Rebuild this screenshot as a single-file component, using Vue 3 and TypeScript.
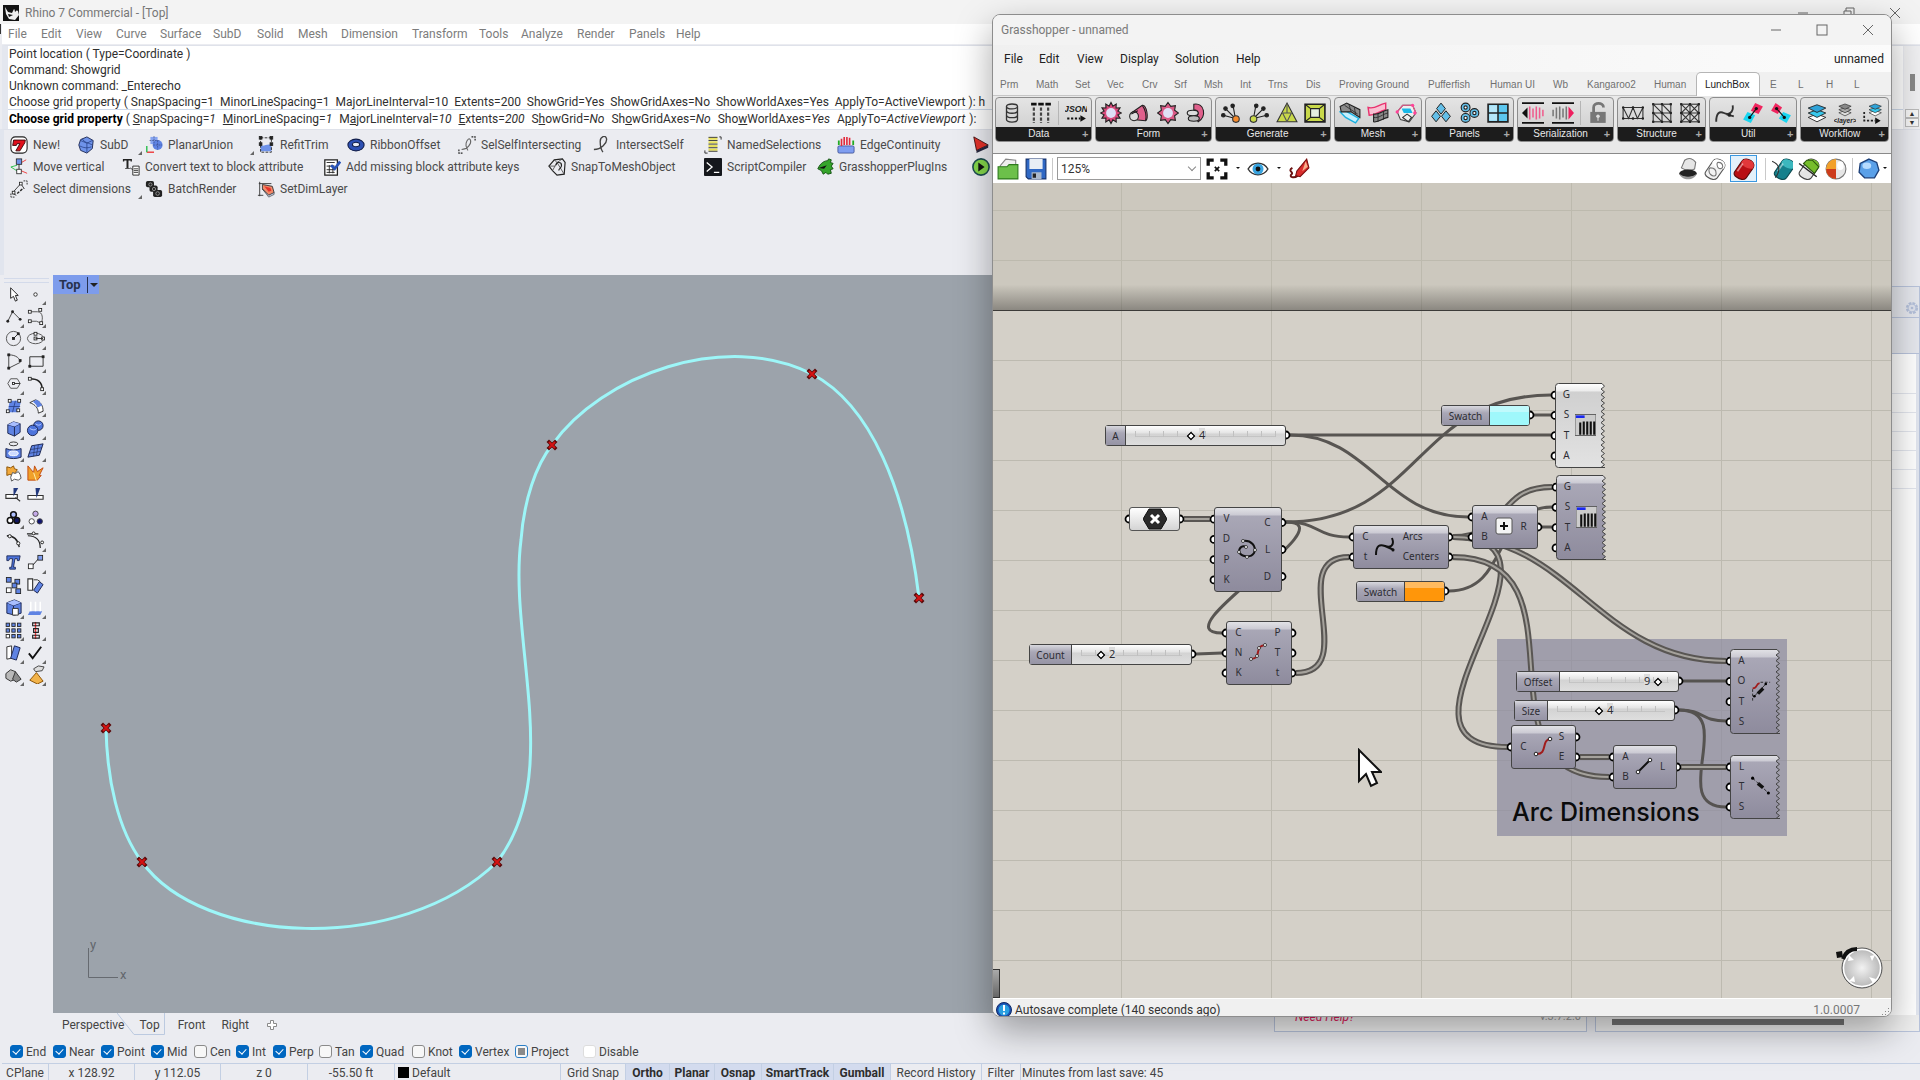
<script setup lang="ts">
import { computed, ref } from 'vue'

interface Sized { label: string; w: number }
interface Tool extends Sized { icon: string; flyout?: boolean }

const rhinoMenu: Sized[] = [
  { label: 'File', w: 33 }, { label: 'Edit', w: 35 }, { label: 'View', w: 40 }, { label: 'Curve', w: 44 },
  { label: 'Surface', w: 53 }, { label: 'SubD', w: 44 }, { label: 'Solid', w: 41 }, { label: 'Mesh', w: 43 },
  { label: 'Dimension', w: 71 }, { label: 'Transform', w: 67 }, { label: 'Tools', w: 42 }, { label: 'Analyze', w: 56 },
  { label: 'Render', w: 52 }, { label: 'Panels', w: 47 }, { label: 'Help', w: 40 },
]

const history: string[] = [
  'Point location ( Type=Coordinate )',
  'Command: Showgrid',
  'Unknown command: _Enterecho',
  'Choose grid property ( SnapSpacing=1  MinorLineSpacing=1  MajorLineInterval=10  Extents=200  ShowGrid=Yes  ShowGridAxes=No  ShowWorldAxes=Yes  ApplyTo=ActiveViewport ): h',
]

interface Option { pre: string; key: string; post: string; value: string }
const options: Option[] = [
  { pre: '', key: 'S', post: 'napSpacing', value: '1' },
  { pre: '', key: 'M', post: 'inorLineSpacing', value: '1' },
  { pre: 'M', key: 'a', post: 'jorLineInterval', value: '10' },
  { pre: '', key: 'E', post: 'xtents', value: '200' },
  { pre: 'S', key: 'h', post: 'owGrid', value: 'No' },
  { pre: 'Sh', key: 'o', post: 'wGridAxes', value: 'No' },
  { pre: 'Sho', key: 'w', post: 'WorldAxes', value: 'Yes' },
  { pre: 'A', key: 'p', post: 'plyTo', value: 'ActiveViewport' },
]

const toolRows: Tool[][] = [
  [
    { icon: 'seven', label: 'New!', w: 67 }, { icon: 'subd', label: 'SubD', w: 68, flyout: true },
    { icon: 'planar', label: 'PlanarUnion', w: 112, flyout: true }, { icon: 'refit', label: 'RefitTrim', w: 90 },
    { icon: 'ribbon', label: 'RibbonOffset', w: 111 }, { icon: 'selself', label: 'SelSelfIntersecting', w: 135 },
    { icon: 'loop', label: 'IntersectSelf', w: 111 }, { icon: 'named', label: 'NamedSelections', w: 133 },
    { icon: 'edge', label: 'EdgeContinuity', w: 135 }, { icon: 'book', label: '', w: 22 },
  ],
  [
    { icon: 'move', label: 'Move vertical', w: 112 }, { icon: 'convert', label: 'Convert text to block attribute', w: 201 },
    { icon: 'addkeys', label: 'Add missing block attribute keys', w: 225 }, { icon: 'snapmesh', label: 'SnapToMeshObject', w: 156 },
    { icon: 'script', label: 'ScriptCompiler', w: 112 }, { icon: 'plug', label: 'GrasshopperPlugIns', w: 156 },
    { icon: 'run', label: '', w: 22 },
  ],
  [
    { icon: 'seldim', label: 'Select dimensions', w: 135, flyout: true }, { icon: 'batch', label: 'BatchRender', w: 112 },
    { icon: 'dimlayer', label: 'SetDimLayer', w: 112 },
  ],
]

const sq = (x: number, y: number, f = '#fff', s = 3) => `<rect x="${x - s / 2}" y="${y - s / 2}" width="${s}" height="${s}" fill="${f}" stroke="#222" stroke-width=".9"/>`
const star = (n: number, R: number, r: number, c: string) => {
  const p: string[] = []
  for (let i = 0; i < n * 2; i++) {
    const q = i % 2 ? r : R
    const a = Math.PI * i / n - Math.PI / 2
    p.push(`${(10 + q * Math.cos(a)).toFixed(2)},${(10 + q * Math.sin(a)).toFixed(2)}`)
  }
  return `<polygon points="${p.join(' ')}" fill="${c}" stroke="#222" stroke-width="1"/>`
}
const layers = (a: string, b: string, c: string) =>
  `<g stroke="#222" stroke-width=".8"><path d="M2 14l8-3 8 3-8 4z" fill="${c}"/><path d="M2 10l8-3 8 3-8 4z" fill="${b}"/><path d="M2 5.500l8-3 8 3-8 4z" fill="${a}"/></g>`
// Tilted barrel: body, lit top face and a highlight stripe.
const barrel = (body: string, face: string, edge: string) =>
  `<path d="M1.500 12.500L8 3c2-3 6-2 8.500-.5 3 2 3 5 1.500 7l-6 8.500c-2 2.500-6 1.500-8.500-.5-2.500-1.500-3-3.500-2-5z" fill="${body}" stroke="${edge}"/><path d="M8 3c2-3 6-2 8.500-.5 3 2 3 5 1.500 7-2 1-6-.5-8-2S7 4 8 3z" fill="${face}"/><path d="M4 12l5-7" stroke="#fff" stroke-opacity=".5" stroke-width="1.500"/>`
const truss = (extra: string) =>
  `<g fill="none" stroke="#333" stroke-width="1"><rect x="2" y="2" width="16" height="16"/><path d="${extra}"/></g>${[2, 10, 18].map(x => [2, 10, 18].map(y => `<rect x="${x - 1}" y="${y - 1}" width="2" height="2" fill="#222"/>`).join('')).join('')}`

const art: Record<string, string> = {
  seven: '<rect x="1" y="1" width="18" height="18" rx="5" fill="#fff" stroke="#222" stroke-width="1.200"/><path d="M4 4.500h13l-.5 3-5.500 9H6.500l4.500-8H8l-1 2H3z" fill="#e0101c" stroke="#3a0508" stroke-width="1"/>',
  subd: '<path d="M4 4l7-3 7 4-1 9-6 5-7-3-2-6z" fill="#6f93ea" stroke="#1a2550" stroke-width="1"/><path d="M4 5l7 3 6-3M11 8v10M6 3c1 4 8 5 11 7M3 11c4 2 8 3 13 1" fill="none" stroke="#22397e" stroke-width=".8"/>',
  planar: '<path d="M2 18h8" fill="none" stroke="#e33" stroke-width="1.500"/><path d="M2 11v7" stroke="#2b4" stroke-width="1.500"/><rect x="6" y="1" width="8" height="8" fill="#86a4f0"/><circle cx="14" cy="10" r="5.500" fill="#5f83e3"/><path d="M10 0v9M5 5h10M14 5v10M9 10h10" stroke="#33457e" stroke-width=".7" stroke-dasharray="2 1"/>',
  refit: '<path d="M4 10c3 3 9-3 12 1v6H4z" fill="#6f93ea"/><path d="M4 2h12v16H4z" fill="none" stroke="#222" stroke-width="1" stroke-dasharray="3 1.500"/>' + sq(4, 2, '#222') + sq(16, 2, '#222') + sq(4, 9, '#222') + sq(16, 9, '#222'),
  ribbon: '<ellipse cx="10" cy="10" rx="9" ry="6.500" fill="#2d50b4" stroke="#0f1c4a" stroke-width="1.200"/><ellipse cx="10" cy="9.500" rx="4" ry="2.500" fill="#e8ebf5" stroke="#0f1c4a" stroke-width="1.200"/>',
  selself: '<path d="M4 15c6 0 11-6 10-10s-4-1-5 3 1 6 2 8" fill="none" stroke="#666" stroke-width="1.200"/><path d="M15 1h4v4M1 15v4h4" fill="none" stroke="#222" stroke-width="1.300" stroke-dasharray="2 1"/>',
  loop: '<path d="M1 15c8 0 15-7 14-12s-7-2-7 3 1 9 3 12" fill="none" stroke="#444" stroke-width="1.500"/>',
  named: '<path d="M5 3h10M5 7h10M5 11h10M5 15h10" stroke="#e8e05a" stroke-width="2.500"/><path d="M5 1.500h10M5 5h10M5 9h10M5 13h10M5 17h10" stroke="#333" stroke-width="1"/><path d="M17 1h2v3M1 16v3h3" fill="none" stroke="#222"/>',
  edge: '<rect x="1" y="11" width="18" height="8" rx="1.500" fill="#7f9df0" stroke="#2b3f86" stroke-width=".8"/><path d="M2 5v5M18 5v5" stroke="#2a2" stroke-width="2"/><path d="M5 3v8M8 1v9M11 1v9M14 2v8" stroke="#e22a3c" stroke-width="1.800"/>',
  book: '<path d="M2 1l16 9-13 6z" fill="#e5322a" stroke="#401010"/><path d="M5 16l13-6v3L5 19z" fill="#282840"/>',
  move: '<path d="M1 10l7-2M1 10l8 5" stroke="#2b4" stroke-width="1"/><path d="M11 6l7-4M12 14l7 3" stroke="#e33"/><path d="M10 6v8" stroke="#222"/>' + sq(10, 4, '#6f93ea', 6) + sq(10, 15, '#fff', 5),
  convert: '<path d="M1 1h10v3H9.500V2.800H7.200V11h1.500v1H3.500v-1H5V2.800H2.500V4H1z" fill="#222"/><path d="M12 9h7v10h-7z" fill="#fff" stroke="#222"/><path d="M13 12h5M13 14h5M13 16h5M9 11l3 2" stroke="#333"/>',
  addkeys: '<path d="M2 2h14v17H2z" fill="#fff" stroke="#222" stroke-width="1.400"/><path d="M4 5h9M4 9h9M4 13h9M7 8v9M11 8v9M4 16h9" stroke="#222"/><path d="M9 8l4 4 6-8" fill="none" stroke="#2853b8" stroke-width="3"/>',
  snapmesh: '<path d="M1 9l6-7 9-1 3 4-1 13-8 1-5-5z" fill="none" stroke="#222" stroke-width="1.300"/><path d="M7 2l3 3-5 9M10 5l8 13M1 9l7 0M16 1l-6 4" fill="none" stroke="#444" stroke-width=".9"/><path d="M9 8c0-4 6-4 6 0s-3 3-3 6" fill="none" stroke="#222" stroke-width="1.300"/>',
  script: '<rect width="20" height="20" y="0" rx="1" fill="#15171c"/><path d="M3 5l6 5-6 5" fill="none" stroke="#fff" stroke-width="1.400"/><path d="M11 16h6" stroke="#fff" stroke-width="1.400"/>',
  plug: '<path d="M2 12c3-7 8-9 11-9l1-2 3 1-1 3 3 1-2 3 2 3-3 1 1 4-4 1-2-2-3 2-2-4z" fill="#35a52b" stroke="#114d10"/><path d="M3 11l9-3-3 4z" fill="#111"/>',
  run: '<circle cx="10" cy="10" r="9" fill="#85d84b" stroke="#1d4d50" stroke-width="1.800"/><path d="M7 5l7 5-7 5z" fill="#111"/>',
  seldim: '<path d="M3 14l9-10M12 4l4 6M3 15l4 2" stroke="#333" fill="none"/><path d="M15 1h4v4M1 15v4h4" fill="none" stroke="#222" stroke-dasharray="2 1"/>' + sq(12, 4) + sq(4, 14) + '<path d="M8 15l7-6" stroke="#222" stroke-width="1.500" stroke-dasharray="3 1.500"/>',
  batch: '<g fill="#222"><rect x="1" y="1" width="9" height="7" rx="2"/><rect x="5" y="6" width="9" height="7" rx="2"/><rect x="9" y="11" width="10" height="8" rx="2"/></g><g fill="none" stroke="#999"><circle cx="6" cy="5" r="1.800"/><circle cx="10" cy="10" r="1.800"/><circle cx="14" cy="15" r="2"/></g>',
  dimlayer: '<path d="M2 4h14M3 2v16M1 17h6" stroke="#333" fill="none"/><path d="M6 5l11 2 2 7-6 3-7-7z" fill="#f08a6a" stroke="#333"/><path d="M8 7l7 2 1 3-3 1z" fill="#e5322a"/><path d="M6 10l7 7 6-3v2l-6 3z" fill="#cfd6ee" stroke="#333" stroke-width=".7"/>',
}

const pal: [string, boolean][] = [
  ['<path d="M7 3v11l3-2 2 5 2-1-2-5h3z" fill="#fff" stroke="#222"/>', false],
  ['<circle cx="10" cy="10" r="1.800" fill="#fff" stroke="#333"/>', true],
  ['<path d="M4 15L9 5l8 8" fill="none" stroke="#444"/><g fill="#222"><circle cx="4" cy="15" r="1.500"/><circle cx="9" cy="5" r="1.500"/><circle cx="17" cy="13" r="1.500"/></g>', true],
  ['<path d="M4 5h8c6 0 6 8 4 12M4 15h7l5 2" fill="none" stroke="#555"/>' + sq(4, 5) + sq(15, 3) + sq(4, 15) + sq(16, 17), true],
  ['<circle cx="10" cy="10" r="7.500" fill="none" stroke="#555"/><path d="M10 10l5-5" stroke="#333"/>' + sq(10, 10, '#222', 2) + sq(15, 5, '#222', 2), true],
  ['<ellipse cx="10" cy="10" rx="8.500" ry="5.500" fill="none" stroke="#555"/>' + sq(10, 5) + sq(10, 10) + sq(18, 10) + '<path d="M10 10h8" stroke="#333"/>', true],
  ['<path d="M5 3c8 0 12 4 12 8L5 17z" fill="none" stroke="#444"/>' + sq(5, 3, '#222', 2) + sq(5, 17, '#222', 2) + sq(17, 9, '#222', 2), true],
  ['<path d="M4 5h14v10H4z" fill="none" stroke="#333"/>' + sq(4, 15, '#222', 2) + sq(18, 5, '#222', 2), true],
  ['<path d="M4 10l3-5h7l3 5-3 5H7z" fill="none" stroke="#555"/><path d="M10 10h7" stroke="#333"/>' + sq(10, 10, '#fff', 2), true],
  ['<path d="M4 5c9 0 13 4 13 11" fill="none" stroke="#222" stroke-width="1.600"/>' + sq(4, 5) + sq(17, 16), true],
  ['<path d="M6 4h12l-3 12H4z" fill="#5f83e3"/><path d="M12 4l-3 12M5 10h12" stroke="#22397e" stroke-width=".8"/>' + sq(6, 4) + sq(16, 4) + sq(4, 15) + sq(15, 14), true],
  ['<path d="M4 6l6-3c6 2 8 7 8 12l-5 2c0-5-3-9-9-11z" fill="#fff" stroke="#333"/><path d="M7 5l4-2c3 1 5 4 6 6l-5 2c-1-3-3-5-5-6z" fill="#5f83e3"/>', true],
  ['<path d="M4 6l6-3 7 2v9l-6 4-7-3z" fill="#5f83e3" stroke="#1a2550"/><path d="M4 6l7 2v10M11 8l6-3" fill="none" stroke="#1a2550"/><path d="M4 6l6-3 7 2-6 3z" fill="#a8beff"/>', true],
  ['<circle cx="13" cy="7" r="5" fill="#4d74dc" stroke="#1a2550"/><circle cx="7" cy="12" r="5.500" fill="#4d74dc" stroke="#1a2550"/><path d="M4 10c3 2 6 2 7 0M10 5c2 2 5 2 6 0" stroke="#b9caff" fill="none"/>', true],
  ['<ellipse cx="10" cy="3" rx="4.500" ry="2" fill="none" stroke="#333"/><path d="M2 8c5 2 11 2 16 0v9c-5 2-11 2-16 0z" fill="#5f83e3" stroke="#1a2550"/><ellipse cx="10" cy="13" rx="5" ry="2.500" fill="#cddaff" stroke="#fff"/>', true],
  ['<path d="M6 5l12-2-4 12-12 2z" fill="#5f83e3" stroke="#1a2550"/><path d="M9 5l-1 11M13 4l-2 11M5 9l12-2M3 13l12-2" stroke="#1a2550" stroke-width=".6"/>', true],
  ['<path d="M3 3l4 1 3-2 1 3 3 1-2 3-3 3-3-1-3 1 0-4z" fill="#f2a93b" stroke="#8a5206"/><path d="M9 9l3 1 3-2 2 3 1 4-3 2-4-1-3 2-1-4z" fill="#fff" stroke="#555"/>', false],
  ['<path d="M2 2l6 7 1-7 3 6 6-4-4 8 2 0-4 5H2z" fill="#f0a02a" stroke="#c24a10"/><path d="M8 9l3 9" stroke="#fff2b0"/>', false],
  ['<path d="M2 9h12v4H2zM12 12l5 4" fill="#fff" stroke="#333" stroke-width="1.200"/><path d="M10 2l5 0-5 9z" fill="#22397e"/>', false],
  ['<path d="M2 10h16v4H2z" fill="#fff" stroke="#333" stroke-width="1.200"/><path d="M10 2h5l-4 11z" fill="#22397e"/>', false],
  ['<g stroke="#111" stroke-width="1.600"><circle cx="10" cy="6" r="3" fill="#aebfff"/><circle cx="6.500" cy="12" r="3" fill="#fff"/><circle cx="13.500" cy="12" r="3" fill="#101560"/></g>', true],
  ['<g stroke="#444"><circle cx="10" cy="5" r="2.800" fill="#c4a9e8"/><circle cx="6" cy="13" r="2.800" fill="#fff"/><circle cx="14.500" cy="13" r="2.800" fill="#101570"/></g>', false],
  ['<path d="M3 5c8 0 12 5 13 12" fill="none" stroke="#222" stroke-width="1.400"/><g fill="#fff" stroke="#222"><circle cx="6" cy="5.500" r="1.700"/><circle cx="15" cy="13" r="1.700"/></g>', false],
  ['<path d="M1 3h12M2 5c9 0 13 5 13 13" fill="none" stroke="#222" stroke-width="1.300"/><g fill="#fff" stroke="#222"><circle cx="8" cy="2.500" r="1.500"/><circle cx="17" cy="12" r="1.500"/></g>', true],
  ['<path d="M3 3h14l-1 5h-2V6h-2.500l-1.500 9h2v2H6v-2h2l1-9H6L5 8H3z" fill="#4d74dc" stroke="#1a2550" stroke-width=".9"/>', false],
  ['<path d="M7 13l7-8" stroke="#222"/>' + sq(5, 14, '#fff', 5) + sq(15, 5, '#7f9df0', 5), true],
  [sq(5, 4, '#5f83e3', 5) + sq(14, 6, '#5f83e3', 5) + sq(5, 15, '#fff', 5) + sq(11, 10, '#5f83e3', 5) + sq(15, 16, '#5f83e3', 5), false],
  ['<path d="M2 3h5v12H2z" fill="#fff" stroke="#333" stroke-width="1.200"/><path d="M14 6l4 3-6 9-4-3z" fill="#5f83e3" stroke="#1a2550"/><path d="M8 4h4l3 2" stroke="#333" fill="none"/>', false],
  ['<path d="M3 5l8-3 7 3v11l-7 2-8-2z" fill="#5f83e3" stroke="#1a2550"/><path d="M3 5l7 3 8-3M10 8v10" stroke="#1a2550" fill="none"/><path d="M3 5l8-3 7 3-8 3z" fill="#a8beff"/><path d="M9 11h6v7H9z" fill="#fff" stroke="#333"/>', true],
  ['<path d="M4 14h13l-2 4H2z" fill="#5f83e3"/><path d="M5 14V4M10 14V4M15 14V4" stroke="#fff" stroke-width="1.600"/>', true],
  [[4, 10, 16].map(y => [4, 10, 16].map(x => sq(x, y, y === 16 && x === 4 ? '#fff' : '#5f83e3', 3.5)).join('')).join(''), true],
  ['<path d="M10 1v18" stroke="#e33" stroke-width="1.500"/><path d="M7 2h7v3H7zM8 8h5v4H8zM7 15h7v3H7z" fill="none" stroke="#222" stroke-width="1.200"/>', true],
  ['<path d="M3 4l5-1v13l-5 1z" fill="#fff" stroke="#333"/><path d="M11 3l6 2-4 13-6-2z" fill="#5f83e3" stroke="#1a2550"/>', true],
  ['<path d="M3 11l4 5 9-12" fill="none" stroke="#111" stroke-width="2"/>', true],
  ['<path d="M2 9l5-4 5 2v8l-5 2-5-3z" fill="#b9b9b9" stroke="#333"/><path d="M12 7l6 8-5 3-4-3z" fill="#8c8c8c" stroke="#333"/>', true],
  ['<path d="M8 4l5-3 6 1-2 4-7 1z" fill="#ddd" stroke="#444"/><path d="M11 8l7 9-6 3-8-4z" fill="#f2b34a" stroke="#8a5206"/>', true],
]

const ribbon: { name: string; w: number; icons: string[] }[] = [
  { name: 'Data', w: 97, icons: [
    '<g fill="#d7d7d7" stroke="#333" stroke-width="1.200"><path d="M5 4v12c0 3 10 3 10 0V4"/><ellipse cx="10" cy="4" rx="5" ry="2.200"/><path d="M5 8c0 3 10 3 10 0M5 12c0 3 10 3 10 0" fill="none"/></g>',
    '<path d="M1 2h5M7.500 2h5M14 2h5" stroke="#111" stroke-width="2.500"/><path d="M3.500 5v14M10 5v14M16.500 5v14" stroke="#444" stroke-width="2" stroke-dasharray="3 1.500"/>', '|',
    '<text x="10" y="9" text-anchor="middle" font-family="Liberation Sans" font-size="8" font-weight="bold" font-style="italic" fill="#222">JSON</text><path d="M2 15h12" stroke="#111" stroke-width="2" stroke-dasharray="2 1.500"/><path d="M14 12l5 3-5 3z" fill="#111"/>',
  ] },
  { name: 'Form', w: 116, icons: [
    star(12, 9.5, 6.5, '#d94a7c') + '<circle cx="10" cy="10" r="4.500" fill="#dfe0f6"/>',
    '<path d="M3 10L13 3c4-1 6 12 3 14l-12-1z" fill="#e0608c" stroke="#222"/><ellipse cx="5.500" cy="13" rx="4" ry="4" fill="#ddd" stroke="#222"/><path d="M13 3c3 4 4 10 3 14M3 11l6-3" fill="none" stroke="#222"/>',
    star(8, 9.5, 6.5, '#d95a86') + '<circle cx="10" cy="10" r="4.500" fill="#dfe0f6"/>',
    '<path d="M8 2c10-2 12 12 4 16l-3-5c4 0 4-6-1-6z" fill="#e0608c" stroke="#222"/><ellipse cx="7" cy="10" rx="5" ry="2.500" fill="#ddd" stroke="#222"/><ellipse cx="8" cy="15" rx="5" ry="2.500" fill="#bbb" stroke="#222"/>',
  ] },
  { name: 'Generate', w: 116, icons: [
    '<g stroke="#222" fill="#222"><path d="M14 15L3 12M14 15L5 6M14 15L12 4"/><circle cx="3" cy="12" r="1.600"/><circle cx="5" cy="6" r="1.600"/><circle cx="11.500" cy="3.500" r="1.600"/></g><circle cx="14.500" cy="15.500" r="3" fill="#f58a2c" stroke="#333"/>',
    '<g stroke="#222" fill="#222"><path d="M5 15L17 12M5 15L14 6M5 15L7 4"/><circle cx="17" cy="12" r="1.600"/><circle cx="14" cy="6" r="1.600"/><circle cx="7.500" cy="3.500" r="1.600"/></g><circle cx="5" cy="15.500" r="3" fill="#c9d94a" stroke="#333"/>',
    '<path d="M10 1l9 17H1z" fill="#c9d94a" stroke="#333"/><path d="M5.500 10h9M10 18l-4-8M10 18l4-8M10 1v9" stroke="#555" fill="none"/>',
    '<path d="M1 2h18v16H1z" fill="#c9d94a" stroke="#222" stroke-width="1.500"/><path d="M6 6h8v8H6z" fill="#e5efe0" stroke="#222"/><path d="M1 2l5 4M19 2l-5 4M1 18l5-4M19 18l-5-4" stroke="#222"/>',
  ] },
  { name: 'Mesh', w: 88, icons: [
    '<path d="M1 9l5-1 12 7-3 4-9-5z" fill="#c3f0ff" stroke="#1ab0e0" stroke-width="1.300"/><path d="M1 4l6-3 12 6v7l-8-5-9 0z" fill="#8a8a8a" stroke="#222"/><path d="M5 3l12 8M9 2l2 7M14 5l1 6" stroke="#222" fill="none" stroke-width=".7"/>',
    '<path d="M1 5c7 2 9-3 16-4v6c-6 1-8 5-15 5z" fill="#f9c0d2" stroke="#e8326e" stroke-width="1.300"/><path d="M6 11c5 1 8-3 13-4v7c-5 1-9 5-13 4z" fill="#888" stroke="#222"/><path d="M10 11v7M15 9v7M6 14c5 1 8-3 13-4" stroke="#222" fill="none" stroke-width=".7"/>',
    '<path d="M2 9l5-6 9 0 3 7-6 8-8-2z" fill="#eee" stroke="#444"/><path d="M6 6h8l2 4H8z" fill="#19b9e8"/><path d="M2 9l5-6 9 0 3 7" fill="none" stroke="#e8588a"/><path d="M7 14l4-3 4 3-3 4z" fill="none" stroke="#333"/><g fill="#f49" ><circle cx="2" cy="9" r="1.500"/><circle cx="16" cy="3" r="1.500"/><circle cx="18" cy="10" r="1.500"/></g>',
  ] },
  { name: 'Panels', w: 88, icons: [
    '<g fill="#64bfe8" stroke="#222" stroke-width=".9"><path d="M10 1l4 5-4 5-4-5zM5.500 8l4 5-4 5-4-5zM14.500 8l4 5-4 5-4-5z"/></g>',
    '<g fill="#64bfe8" stroke="#222"><circle cx="6" cy="5" r="4"/><circle cx="6" cy="14.500" r="4"/><circle cx="14" cy="10" r="4"/></g><g fill="#fff" stroke="#222"><circle cx="6" cy="5" r="1.500"/><circle cx="6" cy="14.500" r="1.500"/><circle cx="14" cy="10" r="1.500"/></g>',
    '<path d="M1 2h18v16H1z" fill="#5cc6ee" stroke="#222" stroke-width="1.500"/><path d="M2 17V3h8v14z" fill="#b5e6f8"/><path d="M10 2v16M1 10h18" stroke="#222" stroke-width="1.400"/>',
  ] },
  { name: 'Serialization', w: 97, icons: [
    '<path d="M0 1h20M0 19h20" stroke="#111" stroke-width="1.600"/><path d="M5 5v10L0 10z" fill="#111"/><path d="M7 4v12M10 6v8M13 4v12M16 5v10M19 7v6" stroke="#ef5c8d" stroke-width="1.400"/>',
    '<path d="M0 1h20M0 19h20" stroke="#111" stroke-width="1.600"/><path d="M15 4v12l5-6z" fill="#ee1f5e"/><path d="M1 7v6M4 5v10M7 4v12M10 6v8M13 4v12" stroke="#777" stroke-width="1.400"/>', '|',
    '<path d="M6 9V5c0-5 9-5 9 0" fill="none" stroke="#777" stroke-width="2.500"/><rect x="3" y="9" width="14" height="10" fill="#777"/><circle cx="10" cy="13" r="1.600" fill="#ddd"/><path d="M10 13v4" stroke="#ddd"/>',
  ] },
  { name: 'Structure', w: 88, icons: [
    '<g fill="none" stroke="#333"><path d="M1 5h18v10H1zM1 5l5 10 4-10 4 10 5-10"/></g>' + [1, 10, 19].map(x => `<circle cx="${x}" cy="5" r="1.200" fill="#222"/><circle cx="${x}" cy="15" r="1.200" fill="#222"/>`).join(''),
    truss('M10 2v16M2 10h16M2 2l16 16M10 2l8 8M2 10l8 8'),
    truss('M10 2v16M2 10h16M2 2l16 16M18 2L2 18M10 2l8 8-8 8-8-8z'),
  ] },
  { name: 'Util', w: 88, icons: [
    '<path d="M2 18c0-8 3-10 7-8s9 0 8-7M11 11l7 2" fill="none" stroke="#333" stroke-width="1.700"/><circle cx="14" cy="12" r="1.500" fill="#222"/>',
    '<path d="M12 1l7 3-4 7-7-3z" fill="#f0265f"/><path d="M5 9l7 3-4 7-7-3z" fill="#18d5f0"/><path d="M13 6L7 14" stroke="#111"/><circle cx="13" cy="6" r="1.500" fill="#111"/><circle cx="7" cy="14" r="1.500" fill="#111"/>',
    '<path d="M5 1l6 4-4 6-6-3z" fill="#f0265f"/><path d="M12 9l7 3-4 7-7-4z" fill="#18d5f0"/><path d="M6 6l7 8" stroke="#111"/><circle cx="6" cy="6" r="1.500" fill="#111"/><circle cx="13" cy="14" r="1.500" fill="#111"/>',
  ] },
  { name: 'Workflow', w: 88, icons: [
    layers('#2fa3d8', '#38c8ec', '#fff'),
    '<g transform="translate(3 0) scale(.7)">' + layers('#888', '#aaa', '#ddd') + '</g><text x="10" y="19" text-anchor="middle" font-family="Liberation Sans" font-size="6" font-style="italic" font-weight="bold" fill="#222">&lt;layer&gt;</text>',
    '<g transform="translate(5 0) scale(.7)">' + layers('#2fa3d8', '#38c8ec', '#fff') + '</g><path d="M2 9v8h10" fill="none" stroke="#222" stroke-width="1.600" stroke-dasharray="2 1.500"/><path d="M12 14l5 3-5 3z" fill="#111"/>',
  ] },
]

const ghTools = {
  open: '<path d="M3 7l5-6 9 1v8H3z" fill="#eee" stroke="#888"/><path d="M1 8h8l2-2h8v13H1z" fill="#6cc04a" stroke="#2c7a1c"/>',
  save: '<path d="M1 1h18v18H3l-2-2z" fill="#2f68c4" stroke="#16336e"/><path d="M4 1h12v9H4z" fill="#e8eef5"/><path d="M6 13h9v6H6z" fill="#aab8cc"/><path d="M7 14h3v4H7z" fill="#222"/>',
  extents: '<path d="M2 7V2h5M13 2h5v5M18 13v5h-5M7 18H2v-5" fill="none" stroke="#111" stroke-width="3"/><path d="M8 8l4 4M12 8l-4 4" stroke="#111" stroke-width="1.500"/>',
  eye: '<path d="M1 10C5 3 15 3 19 10 15 17 5 17 1 10z" fill="#fff" stroke="#333" stroke-width="1.300"/><circle cx="10" cy="10" r="5" fill="#38a3df"/><circle cx="10" cy="10" r="2.200" fill="#111"/>',
  pen: '<path d="M4 9c-5 3 2 4-1 6-2 2 2 4 6 1" fill="none" stroke="#6b1414" stroke-width="1.800"/><path d="M8 12L17 1l2 8-8 8-4-1z" fill="#d92d2d" stroke="#7a1010"/><path d="M16 3l2 5-5 4z" fill="#f7b08c"/>',
}
const ghRight = [
  '<path d="M4 9l3-7c4-3 8-1 10 2l-1 6c-4 2-9 1-12-1z" fill="#e6e6e6" stroke="#777"/><ellipse cx="10" cy="14" rx="8" ry="3.500" fill="#222"/><path d="M2 14c2 7 14 7 16 0-4 4-12 4-16 0z" fill="#999"/>',
  barrel('#f2f2f2', '#fff', '#555') + '<path d="M6 9c3 0 5 2 5 5s-3 3-5 1-2-6 0-6zM13 4c3 0 4 2 4 4s-3 2-4 1-2-5 0-5z" fill="none" stroke="#777"/>',
  barrel('#b80f14', '#e2383a', '#5a0a0a'), '|',
  '<g transform="translate(2 0)">' + barrel('#15808c', '#3cb7be', '#0c4a50') + '</g><path d="M1 3c7 3 8 8 3 15" fill="none" stroke="#333"/>',
  barrel('#e4e4e4', '#76bd2b', '#444') + '<path d="M5 5l10 9 4-6-6-6-5 0z" fill="#76bd2b" stroke="#2d5a10"/><path d="M1 5l16 12" stroke="#222" stroke-width="1.300"/>',
  '<circle cx="10" cy="10" r="9" fill="#e6e6e6" stroke="#777"/><path d="M10 1a9 9 0 0 0 0 18z" fill="#f2a02a"/><path d="M10 10H1a9 9 0 0 0 9 9z" fill="#cc3b1c"/><ellipse cx="14" cy="7" rx="3" ry="4" fill="#fff"/>', '|',
  '<path d="M10 1l7 3 2 7-4 7H6l-5-5 1-8z" fill="#5aa0e8" stroke="#1c3f78" stroke-width="1.200"/><ellipse cx="8" cy="7" rx="4" ry="3" fill="#b6dbff"/>',
]

const ghMenu: Sized[] = [
  { label: 'File', w: 35 }, { label: 'Edit', w: 38 }, { label: 'View', w: 43 }, { label: 'Display', w: 55 },
  { label: 'Solution', w: 61 }, { label: 'Help', w: 40 },
]
const ghTabs: Sized[] = [
  { label: 'Prm', w: 36 }, { label: 'Math', w: 39 }, { label: 'Set', w: 32 }, { label: 'Vec', w: 35 }, { label: 'Crv', w: 32 },
  { label: 'Srf', w: 30 }, { label: 'Msh', w: 36 }, { label: 'Int', w: 28 }, { label: 'Trns', w: 38 }, { label: 'Dis', w: 33 },
  { label: 'Proving Ground', w: 89 }, { label: 'Pufferfish', w: 62 }, { label: 'Human UI', w: 63 }, { label: 'Wb', w: 34 },
  { label: 'Kangaroo2', w: 67 }, { label: 'Human', w: 42 }, { label: 'LunchBox', w: 64 }, { label: 'E', w: 28 },
  { label: 'L', w: 28 }, { label: 'H', w: 28 }, { label: 'L', w: 20 },
]
const activeTab = ref('LunchBox')

const osnaps = ref([
  { label: 'End', w: 43, on: true }, { label: 'Near', w: 48, on: true }, { label: 'Point', w: 50, on: true },
  { label: 'Mid', w: 43, on: true }, { label: 'Cen', w: 42, on: false }, { label: 'Int', w: 37, on: true },
  { label: 'Perp', w: 46, on: true }, { label: 'Tan', w: 41, on: false }, { label: 'Quad', w: 52, on: true },
  { label: 'Knot', w: 47, on: false }, { label: 'Vertex', w: 56, on: true }, { label: 'Project', w: 68, on: false, mixed: true },
  { label: 'Disable', w: 60, on: false, faint: true },
] as { label: string; w: number; on: boolean; mixed?: boolean; faint?: boolean }[])

const status: { label: string; w: number; on?: boolean; swatch?: boolean }[] = [
  { label: 'CPlane', w: 47 }, { label: 'x 128.92', w: 86 }, { label: 'y 112.05', w: 86 }, { label: 'z 0', w: 87 },
  { label: '-55.50 ft', w: 87 }, { label: 'Default', w: 166, swatch: true }, { label: 'Grid Snap', w: 65 },
  { label: 'Ortho', w: 44, on: true }, { label: 'Planar', w: 45, on: true }, { label: 'Osnap', w: 47, on: true },
  { label: 'SmartTrack', w: 72, on: true }, { label: 'Gumball', w: 57, on: true }, { label: 'Record History', w: 91 },
  { label: 'Filter', w: 39 },
]

// Node graph. Positions are canvas coordinates, shifted by the current pan.
const pan = { x: -993, y: -183 }
interface GraphNode { x: number; y: number; w: number; h: number; ins: string[]; outs: string[]; icon: string; jag?: boolean; pale?: boolean; side?: boolean }
const barcode = '<rect x="0" y="0" width="24" height="24" fill="#ccc" stroke="#555"/><rect x="1" y="1" width="10" height="3" fill="#1a28f0"/><path d="M6 9v14M10 8v15M14 8v15M18 8v15M22 8v15" stroke="#111" stroke-width="2.400"/>'
const nodes: GraphNode[] = [
  { x: 1214, y: 507, w: 68, h: 85, ins: ['V', 'D', 'P', 'K'], outs: ['C', 'L', 'D'], icon: '<path d="M8 4c8-1 14 5 11 12-4 6-13 3-15-1 0-5 4-7 7-5" fill="none" stroke="#111" stroke-width="2"/><g fill="#fff" stroke="#222" stroke-width=".8"><circle cx="8" cy="4" r="1.500"/><circle cx="20" cy="13" r="1.500"/><circle cx="12" cy="20" r="1.500"/><circle cx="4" cy="15" r="1.500"/><circle cx="11" cy="10" r="1.500"/></g>' },
  { x: 1226, y: 621, w: 66, h: 64, ins: ['C', 'N', 'K'], outs: ['P', 'T', 't'], icon: '<path d="M5 19c7-1 6-3 7-7s1-6 7-7" fill="none" stroke="#a01c1c" stroke-width="2"/><g fill="#fff" stroke="#222" stroke-width=".8"><circle cx="5" cy="19" r="1.500"/><circle cx="11" cy="16" r="1.500"/><circle cx="13" cy="8" r="1.500"/><circle cx="19" cy="5" r="1.500"/></g>' },
  { x: 1353, y: 525, w: 96, h: 44, ins: ['C', 't'], outs: ['Arcs', 'Centers'], side: true, icon: '<path d="M2 21c0-10 4-11 9-9s10 0 7-8M11 12l9 4" fill="none" stroke="#111" stroke-width="2"/><circle cx="19" cy="16" r="1.500" fill="#111"/>' },
  { x: 1472, y: 505, w: 66, h: 44, ins: ['A', 'B'], outs: ['R'], icon: '<rect x="4" y="4" width="16" height="16" rx="2" fill="#f4f4f4" stroke="#555"/><path d="M12 8v8M8 12h8" stroke="#111" stroke-width="2"/>' },
  { x: 1555, y: 383, w: 50, h: 85, ins: ['G', 'S', 'T', 'A'], outs: [], jag: true, pale: true, icon: barcode },
  { x: 1556, y: 475, w: 50, h: 85, ins: ['G', 'S', 'T', 'A'], outs: [], jag: true, icon: barcode },
  { x: 1511, y: 725, w: 65, h: 44, ins: ['C'], outs: ['S', 'E'], icon: '<path d="M5 20c12 1 5-14 14-15" fill="none" stroke="#a01c1c" stroke-width="2"/><g fill="#fff" stroke="#222"><circle cx="5" cy="20" r="1.800"/><circle cx="19" cy="5" r="1.800"/></g>' },
  { x: 1613, y: 745, w: 64, h: 44, ins: ['A', 'B'], outs: ['L'], icon: '<path d="M6 18L18 6" stroke="#111" stroke-width="2"/><g fill="#fff" stroke="#222"><circle cx="6" cy="18" r="1.800"/><circle cx="18" cy="6" r="1.800"/></g>' },
  { x: 1730, y: 649, w: 50, h: 85, ins: ['A', 'O', 'T', 'S'], outs: [], jag: true, icon: '<path d="M3 9c6 0 3-5 8-6" fill="none" stroke="#a01c1c" stroke-width="2"/><path d="M12 2h11M3 10v13" stroke="#222" stroke-dasharray="3 2"/><path d="M5 18L18 4" stroke="#222"/><path d="M9 15l6-6" stroke="#111" stroke-width="4"/><circle cx="5" cy="18" r="1.500"/><circle cx="18" cy="4" r="1.500"/>' },
  { x: 1730, y: 755, w: 50, h: 64, ins: ['L', 'T', 'S'], outs: [], jag: true, icon: '<path d="M3 3l18 17" stroke="#222" stroke-dasharray="4 2"/><path d="M9 9l6 5" stroke="#111" stroke-width="4"/><circle cx="3" cy="3" r="1.800"/><circle cx="21" cy="20" r="1.800"/>' },
]
const sliders = [
  { label: 'A', x: 1105, y: 425, w: 181, lw: 20, value: 4, pos: 86, text: 93 },
  { label: 'Count', x: 1029, y: 644, w: 163, lw: 42, value: 2, pos: 72, text: 79 },
  { label: 'Offset', x: 1516, y: 671, w: 163, lw: 43, value: 9, pos: 142, text: 127 },
  { label: 'Size', x: 1514, y: 700, w: 161, lw: 33, value: 4, pos: 85, text: 92 },
]
const swatches = [
  { x: 1441, y: 405, color: '#9ff8fb' },
  { x: 1356, y: 581, color: '#ff960a' },
]
const grips = computed(() => {
  const out: { x: number; y: number }[] = []
  for (const n of nodes) {
    n.ins.forEach((_, i) => out.push({ x: n.x, y: n.y + 2 + (i + 0.5) * (n.h - 4) / n.ins.length }))
    n.outs.forEach((_, i) => out.push({ x: n.x + n.w, y: n.y + 2 + (i + 0.5) * (n.h - 4) / n.outs.length }))
  }
  for (const s of sliders) out.push({ x: s.x + s.w, y: s.y + 10 })
  for (const s of swatches) out.push({ x: s.x + 89, y: s.y + 10 })
  out.push({ x: 1129, y: 519 }, { x: 1180, y: 519 })
  return out
})
const singles = [
  'M1290 435H1551', 'M1290 435C1370 435 1385 517 1468 517', 'M1286 522C1420 522 1416 395 1551 395',
  'M1286 522C1320 522 1315 537 1349 537', 'M1286 522C1351 522 1157 633 1222 633', 'M1196 654L1222 653',
  'M1534 415H1551', 'M1542 527H1552', 'M1449 591C1510 591 1492 507 1552 507',
  'M1683 681H1726', 'M1679 710C1705 710 1700 721 1726 721', 'M1679 710C1739 710 1666 807 1726 807',
]
const doubles = [
  'M1184 519H1210', 'M1296 673C1362 673 1283 557 1349 557', 'M1453 537H1468', 'M1453 537C1510 537 1495 487 1552 487',
  'M1453 537C1570 537 1600 661 1726 661', 'M1453 537C1594 537 1364 747 1508 747', 'M1453 557C1594 557 1468 777 1609 777',
  'M1580 757H1609', 'M1681 767H1726',
]
const jagPath = (w: number, h: number) => {
  const n = Math.round(h / 5.6)
  const step = (h - 1) / n
  let d = `M3.500 .5H${w - 3}`
  for (let i = 0; i < n; i++) d += `L${w - 0.5} ${(0.5 + step * (i + 0.5)).toFixed(1)}L${w - 4} ${(0.5 + step * (i + 1)).toFixed(1)}`
  return d + `L${w} ${h - 0.5}H3.500Q.5 ${h - 0.5} .5 ${h - 3.5}V3.500Q.5 .5 3.500 .5Z`
}
const at = (o: { x: number; y: number; w?: number; h?: number }) => ({
  left: `${o.x + pan.x}px`, top: `${o.y + pan.y}px`,
  width: o.w ? `${o.w}px` : undefined, height: o.h ? `${o.h}px` : undefined,
})
const points = [[106, 728], [142, 862], [497, 862], [552, 445], [812, 374], [919, 598]]
const panelRows = [0, 1, 2, 3, 4, 5]
</script>

<template>
  <div class="app">
    <header class="titlebar">
      <svg class="logo" viewBox="0 0 16 16"><rect width="16" height="16" fill="#111" /><path d="M2 2l3 5 4 1 2-4 4 2 1 4-4 5-6-1-3-5z" fill="#eee" /><path d="M5 9l5 1-4 2zM11 2l3 3-2 2z" fill="#111" /></svg>
      <span>Rhino 7 Commercial - [Top]</span>
      <div class="wbtns">
        <button aria-label="Minimize"><svg viewBox="0 0 12 12"><path d="M1 6h10" /></svg></button>
        <button aria-label="Restore"><svg viewBox="0 0 12 12"><path d="M1 4h7v7H1zM3 4V1h8v7H8" /></svg></button>
        <button aria-label="Close"><svg viewBox="0 0 12 12"><path d="M1 1l10 10M11 1L1 11" /></svg></button>
      </div>
    </header>
    <nav class="menu rmenu"><a v-for="m in rhinoMenu" :key="m.label" href="#" :style="{ width: m.w + 'px' }">{{ m.label }}</a></nav>

    <section class="command">
      <div class="cmdtext">
        <div class="history"><p v-for="h in history" :key="h">{{ h }}</p></div>
        <p class="prompt"><b>Choose grid property</b> ( <span v-for="(o, i) in options" :key="i">{{ i ? '  ' : '' }}{{ o.pre }}<u>{{ o.key }}</u>{{ o.post }}=<i>{{ o.value }}</i></span> ):</p>
      </div>
      <div class="cmdscroll"><span class="thumb"></span><button aria-label="Up">▲</button><button aria-label="Down">▼</button></div>
    </section>

    <section class="toolbars">
      <div v-for="(row, r) in toolRows" :key="r" class="toolrow">
        <button v-for="t in row" :key="t.icon" class="tool" :class="{ flyout: t.flyout }" :style="{ width: t.w + 'px' }">
          <svg viewBox="0 0 20 20" v-html="art[t.icon]"></svg><span>{{ t.label }}</span>
        </button>
      </div>
    </section>

    <main class="body">
      <aside class="palette">
        <div class="grid">
          <button v-for="(p, i) in pal" :key="i" :class="{ flyout: p[1] }" :aria-label="'Tool ' + (i + 1)"><svg viewBox="0 0 20 20" v-html="p[0]"></svg></button>
        </div>
      </aside>
      <div class="views">
        <div class="viewport">
          <button class="vlabel"><span>Top</span><i></i></button>
          <svg class="drawing">
            <g transform="translate(-53 -275)">
              <path d="M106 728C107 780 118 830 142 862C202 945 400 956 497 862C564 775 508 640 521 540C524 500 536 465 552 445C601 375 726 330 812 374C871 405 906 490 919 598" fill="none" stroke="#9df6f8" stroke-width="3" />
              <g v-for="p in points" :key="p[0]" :transform="`translate(${p[0]} ${p[1]})`"><path d="M-3-3L3 3M3-3L-3 3" stroke="#5a0808" stroke-width="3.500" stroke-linecap="square" /><path d="M-3-3L3 3M3-3L-3 3" stroke="#d41414" stroke-width="2" /></g>
              <path d="M88.500 948V977.500H118" fill="none" stroke="#666a70" />
              <text x="90" y="949" class="axis">y</text><text x="120" y="979" class="axis">x</text>
            </g>
          </svg>
        </div>
        <nav class="vtabs">
          <a href="#">Perspective</a><a href="#" class="on"><svg class="edge" viewBox="0 0 48 22"><path d="M0 0L17 21.500H47.500V0" /></svg>Top</a><a href="#">Front</a><a href="#">Right</a>
          <svg class="add" viewBox="0 0 10 10"><path d="M3.500 .5h3v3h3v3h-3v3h-3v-3h-3v-3h3z" fill="#fff" stroke="#8a8a8a" /></svg>
        </nav>
      </div>
      <aside class="dock first"><em>Need Help?</em><span>v.3.7.2.0</span></aside>
      <aside class="dock second">
        <div class="docktop"><svg viewBox="0 0 16 16"><circle cx="8" cy="8" r="5.500" fill="none" stroke="#b4c0da" stroke-width="3" stroke-dasharray="3 1.300" /><circle cx="8" cy="8" r="4.500" fill="#dfe3ee" stroke="#b4c0da" /><circle cx="8" cy="8" r="1.500" fill="#b4c0da" /></svg></div>
        <div class="docksub"></div>
        <div class="props"><div v-for="r in panelRows" :key="r"></div></div>
        <div class="hscroll"></div>
      </aside>
    </main>

    <section class="osnap">
      <label v-for="o in osnaps" :key="o.label" :style="{ width: o.w + 'px' }"><input v-model="o.on" type="checkbox" :class="{ mixed: o.mixed, faint: o.faint }">{{ o.label }}</label>
    </section>
    <footer class="status">
      <button v-for="s in status" :key="s.label" :class="{ on: s.on, sw: s.swatch }" :style="{ width: s.w + 'px' }"><i v-if="s.swatch"></i>{{ s.label }}</button>
      <span>Minutes from last save: 45</span>
    </footer>

    <section class="gh">
      <header class="ghtitle">
        <span>Grasshopper - unnamed</span>
        <div class="wbtns">
          <button aria-label="Minimize"><svg viewBox="0 0 12 12"><path d="M1 6h10" /></svg></button>
          <button aria-label="Maximize"><svg viewBox="0 0 12 12"><rect x="1" y="1" width="10" height="10" /></svg></button>
          <button aria-label="Close"><svg viewBox="0 0 12 12"><path d="M1 1l10 10M11 1L1 11" /></svg></button>
        </div>
      </header>
      <nav class="menu gmenu"><a v-for="m in ghMenu" :key="m.label" href="#" :style="{ width: m.w + 'px' }">{{ m.label }}</a><span>unnamed</span></nav>
      <div class="ghtabs">
        <button v-for="(t, i) in ghTabs" :key="i" :class="{ on: activeTab === t.label }" :style="{ width: t.w + 'px' }" @click="activeTab = t.label">{{ t.label }}</button>
      </div>
      <div class="ribbon">
        <div v-for="g in ribbon" :key="g.name" class="rgroup" :style="{ flexGrow: g.w }">
          <div class="ricons">
            <template v-for="(ic, i) in g.icons" :key="i"><i v-if="ic === '|'"></i><button v-else :aria-label="g.name + ' ' + (i + 1)"><svg viewBox="0 0 20 20" v-html="ic"></svg></button></template>
          </div>
          <div class="rname"><span>{{ g.name }}</span><b>+</b></div>
        </div>
      </div>
      <div class="ghbar">
        <button aria-label="Open"><svg viewBox="0 0 20 20" v-html="ghTools.open"></svg></button>
        <button aria-label="Save"><svg viewBox="0 0 20 20" v-html="ghTools.save"></svg></button>
        <i class="sep"></i>
        <div class="zoom"><select aria-label="Zoom"><option>125%</option></select></div>
        <button class="drop" aria-label="Zoom extents"><svg viewBox="0 0 20 20" v-html="ghTools.extents"></svg></button>
        <button class="drop" aria-label="Named views"><svg viewBox="0 0 20 20" v-html="ghTools.eye"></svg></button>
        <button aria-label="Sketch"><svg viewBox="0 0 20 20" v-html="ghTools.pen"></svg></button>
        <div class="right">
          <template v-for="(ic, i) in ghRight" :key="i"><i v-if="ic === '|'" class="sep"></i><button v-else :class="{ picked: i === 2, drop: i === 8 }" :aria-label="'Preview ' + i"><svg viewBox="0 0 20 20" v-html="ic"></svg></button></template>
        </div>
      </div>
      <div class="canvas">
        <div class="above"></div>
        <div class="cluster" :style="at({ x: 1497, y: 639, w: 290, h: 197 })"><span>Arc Dimensions</span></div>
        <svg class="wires">
          <g :transform="`translate(${pan.x} ${pan.y})`" fill="none">
            <g stroke="#524f4c" stroke-width="3" opacity=".95"><path v-for="d in singles" :key="d" :d="d" /></g>
            <template v-for="d in doubles" :key="d"><path :d="d" stroke="#595653" stroke-width="6" /><path :d="d" stroke="#a5a29c" stroke-width="2" /></template>
            <circle v-for="(g, i) in grips" :key="i" :cx="g.x" :cy="g.y" r="3.500" fill="#fff" stroke="#000" stroke-width="1.800" />
          </g>
        </svg>
        <div v-for="(n, i) in nodes" :key="i" class="node" :class="{ jag: n.jag, pale: n.pale, side: n.side }" :style="at(n)">
          <svg v-if="n.jag" class="shape" :viewBox="`0 0 ${n.w} ${n.h}`">
            <defs><linearGradient :id="'jg' + i" x2="0" y2="1">
              <stop offset="0" :stop-color="n.pale ? '#fff' : '#e2e2e6'" /><stop offset=".09" :stop-color="n.pale ? '#ececec' : '#cbcad3'" />
              <stop offset=".1" :stop-color="n.pale ? '#d0d0d0' : '#a9a7b6'" /><stop offset="1" :stop-color="n.pale ? '#e2e2e2' : '#8e8b9d'" />
            </linearGradient></defs>
            <path :d="jagPath(n.w, n.h)" :fill="`url(#jg${i})`" stroke="#444" stroke-width="1" />
          </svg>
          <div class="ports"><span v-for="p in n.ins" :key="p">{{ p }}</span></div>
          <svg class="glyph" viewBox="0 0 24 24" v-html="n.icon"></svg>
          <div v-if="n.outs.length" class="ports out"><span v-for="p in n.outs" :key="p">{{ p }}</span></div>
        </div>
        <div class="param" :style="at({ x: 1129, y: 507, w: 51, h: 24 })"><svg viewBox="0 0 24 22"><path d="M6 1h12l6 10-6 10H6L0 11z" fill="#2a2a2a" stroke="#111" /><path d="M8 7l8 8M16 7l-8 8" stroke="#fff" stroke-width="3" /></svg></div>
        <label v-for="s in sliders" :key="s.label" class="slider" :style="at({ x: s.x, y: s.y, w: s.w, h: 21 })">
          <span :style="{ width: s.lw + 'px' }">{{ s.label }}</span>
          <input v-model.number="s.value" type="range" min="0" max="10">
          <i :style="{ left: s.pos + 'px' }"></i><output :style="{ left: s.text + 'px' }">{{ s.value }}</output>
        </label>
        <div v-for="s in swatches" :key="s.color" class="swatch" :style="at({ x: s.x, y: s.y, w: 89, h: 21 })"><span>Swatch</span><i :style="{ background: s.color }"></i></div>
        <svg class="cursor" viewBox="0 0 25 41"><path d="M2 2v31l7-7 5 12 6-3-5-11h9z" fill="#fff" stroke="#111" stroke-width="2" /></svg>
        <div class="handle"></div>
        <svg class="compass" viewBox="0 0 50 46">
          <defs><radialGradient id="cmp"><stop offset="0" stop-color="#f2f2f2" /><stop offset="1" stop-color="#b5b5b5" /></radialGradient></defs>
          <circle cx="28" cy="24" r="20" fill="url(#cmp)" stroke="#555" /><circle cx="28" cy="24" r="18.500" fill="none" stroke="#fff" stroke-width="1.500" />
          <path d="M15 11l5 5-6 1zM41 11l-5 1 2 5zM15 37l5-5 1 6zM42 35l-7-2 4 6z" fill="#fff" />
          <path d="M9 15c2-6 7-10 14-10" fill="none" stroke="#111" stroke-width="4" /><path d="M2 8l6-1 1 6-6 1z" fill="#111" />
        </svg>
      </div>
      <footer class="ghstatus">
        <svg viewBox="0 0 16 16"><circle cx="8" cy="8" r="7.500" fill="#1b4fb0" stroke="#0d2a66" /><circle cx="8" cy="8" r="5.500" fill="#2a9fe0" /><path d="M8 3v6M8 10.500v2" stroke="#fff" stroke-width="2" /></svg>
        <span>Autosave complete (140 seconds ago)</span><small>1.0.0007</small>
        <svg class="sizer" viewBox="0 0 8 8"><path d="M6 1h1v1H6zM6 4h1v1H6zM3 4h1v1H3zM6 7h1v1H6zM3 7h1v1H3zM0 7h1v1H0z" fill="#888" /></svg>
      </footer>
    </section>
  </div>
</template>

<style>
body { margin: 0; background: #ebecf1; }
</style>

<style scoped>
* { box-sizing: border-box; }
.app { position: relative; min-height: 100vh; display: flex; flex-direction: column; padding-left: 2px; overflow: hidden; font: 12px/16px Roboto, "Liberation Sans", sans-serif; color: #333; background: linear-gradient(#333, #333) 0 24px / 1px 10px no-repeat, linear-gradient(#0f8a7a, #0f8a7a) 0 160px / 1px 40px no-repeat, #ebecf1; }
button { font: inherit; color: inherit; background: none; border: 0; padding: 0; margin: 0; text-align: left; }
a { color: inherit; text-decoration: none; }
p { margin: 0; }

.titlebar { height: 24px; display: flex; align-items: center; gap: 6px; margin-left: -2px; padding: 1px 0 0 3px; background: #f3f3f3; color: #777; }
.logo { width: 16px; height: 16px; }
.wbtns { display: flex; margin-left: auto; }
.wbtns button { width: 46px; height: 20px; display: grid; place-items: center; }
.wbtns svg { width: 12px; height: 12px; fill: none; stroke: #666; stroke-width: 1; }
.titlebar .wbtns { padding-right: 2px; }
.menu { display: flex; align-items: center; }
.menu a { flex: none; }
.rmenu { height: 20px; padding-left: 6px; background: #fff; color: #7c7c7c; }

.command { display: flex; margin-top: 1px; height: 84px; border-top: 1px solid #dfe2ea; border-left: 6px solid #e4e7ef; }
.cmdtext { flex: 1; min-width: 0; background: #fff; white-space: pre; overflow: hidden; color: #2f2f2f; }
.cmdtext p { padding-left: 1px; }
.history { height: 64px; border-bottom: 1px solid #cfdaea; }
.cmdtext .prompt { line-height: 18px; }
.prompt b { color: #000; }
.prompt span { margin-right: 1px; }
.cmdscroll { width: 16px; margin-left: 1px; display: flex; flex-direction: column; align-items: center; background: #f0f0f2; }
.cmdscroll .thumb { width: 5px; height: 17px; margin: 28px 0 18px; background: #888; }
.cmdscroll button { width: 14px; height: 9px; font-size: 7px; line-height: 8px; text-align: center; border: 1px solid #bbb; background: #f6f6f6; }

.toolbars { height: 146px; padding: 4px 0 0 6px; color: #4a4a4a; border-left: 4px solid #e1e5ee; margin-left: -2px; border-top: 1px solid #dfe2ea; }
.toolrow { display: flex; height: 22px; }
.tool { position: relative; flex: none; display: flex; align-items: center; gap: 5px; white-space: nowrap; }
.tool svg { width: 18px; height: 18px; flex: none; }
.flyout { position: relative; }
.flyout::after { content: ""; position: absolute; right: 3px; bottom: 1px; border: 2px solid transparent; border-right-color: #666; border-bottom-color: #666; }

.body { flex: 1; display: flex; min-height: 0; }
.palette { width: 51px; padding-top: 3px; }
.palette::before { content: ""; display: block; height: 3px; margin: 0 4px 0 2px; border: solid #d3daea; border-width: 1px 0; }
.grid { height: 403px; display: grid; grid-template-columns: 22px 22px; grid-auto-rows: 1fr; }
.grid button { display: grid; place-items: center; }
.grid svg { width: 19px; height: 19px; }
.grid .flyout::after { right: 0; bottom: 0; }
.views { flex: 1; min-width: 0; display: flex; flex-direction: column; }
.viewport { position: relative; flex: 1; background: #9ca3ab; overflow: hidden; }
.drawing { position: absolute; inset: 0; width: 100%; height: 100%; }
.axis { fill: #62666c; font-size: 13px; }
.vlabel { position: relative; z-index: 1; display: flex; align-items: center; width: 46px; height: 19px; padding-left: 6px; background: #7d9cec; color: #27324e; font-weight: bold; font-size: 13px; }
.vlabel span { width: 29px; border-right: 1px solid #27324e; }
.vlabel i { margin-left: 2px; border: 4px solid transparent; border-top-color: #222; border-bottom: 0; }
.vtabs { height: 27px; display: flex; align-items: flex-start; padding: 0 9px; color: #444; line-height: 24px; }
.vtabs a { margin-right: 16px; height: 21px; }
.vtabs .on { position: relative; margin: 0 18px 0 -1px; }
.edge { position: absolute; right: -5px; top: 0; width: 48px; height: 22px; fill: none; stroke: #bccae0; pointer-events: none; }
.vtabs .add { width: 10px; height: 10px; margin: 7px 0 0 2px; }
.dock { margin: 11px 0 8px; border: 1px solid #b9c4dc; }
.first { width: 313px; margin-right: 8px; display: flex; align-items: flex-end; justify-content: space-between; padding: 0 5px 7px 20px; background: #f3f3f3; color: #999; font-size: 11px; line-height: 14px; }
.first em { color: #e01c5c; font-size: 12px; }
.second { width: 325px; display: flex; flex-direction: column; background: #e6e8ee; }
.docktop { height: 31px; display: flex; justify-content: flex-end; align-items: flex-end; border-bottom: 1px solid #b9c4dc; }
.docktop svg { width: 14px; height: 14px; margin-bottom: 2px; }
.docksub { height: 36px; border-bottom: 1px solid #b9c4dc; }
.props { flex: 1; background: #fff; padding-top: 21px; border-right: 3px solid #e2e6ef; }
.props div { height: 19px; border-bottom: 1px solid #e3e6ee; }
.hscroll { height: 16px; background: #efefef; }
.hscroll::before { content: ""; display: block; width: 232px; height: 6px; margin: 4px 0 0 16px; background: #747474; }

.osnap { height: 23px; display: flex; align-items: center; padding-left: 8px; color: #444; }
.osnap label { flex: none; display: flex; align-items: center; gap: 3px; }
.osnap input { appearance: none; position: relative; width: 13px; height: 13px; margin: 0; border: 1px solid #8a8a8a; border-radius: 3px; background: #f7f7f7; }
.osnap input:checked { background: #0067c0; border-color: #0067c0; }
.osnap input:checked::after { content: ""; position: absolute; left: 3px; top: 1px; width: 4px; height: 6px; border: solid #fff; border-width: 0 1px 1px 0; transform: rotate(42deg); }
.osnap .mixed { border-color: #2a7ec6; }
.osnap .mixed::after { content: ""; position: absolute; inset: 2px; background: #8a8a8a; }
.osnap .faint { border-color: #ddd; background: #fff; }
.status { height: 17px; display: flex; border-top: 1px solid #c3cfe3; color: #444; line-height: 18px; }
.status button { flex: none; text-align: center; border-right: 1px solid #c3cfe3; line-height: 18px; height: 16px; overflow: hidden; white-space: nowrap; }
.status .sw { text-align: left; padding-left: 3px; }
.status .sw i { display: inline-block; width: 11px; height: 11px; margin-right: 3px; background: #000; vertical-align: -1px; }
.status .on { background: #d3dbee; font-weight: bold; color: #2d2d2d; }
.status span { padding-left: 1px; }

.gh { position: absolute; left: 992px; right: 28px; top: 14px; bottom: 63px; display: flex; flex-direction: column; border: 1px solid #8d8d8d; border-radius: 8px; overflow: hidden; background: #f0f0f0; box-shadow: 0 14px 36px rgba(0, 0, 0, .35); }
.ghtitle { height: 30px; display: flex; align-items: center; padding-left: 8px; background: #f3f3f3; color: #7a7a7a; }
.gmenu { height: 27px; padding: 1px 7px 0 11px; background: linear-gradient(90deg, #f0f0f0, #fbfbfb); color: #222; font-size: 12px; }
.gmenu span { margin-left: auto; }
.ghtabs { height: 24px; display: flex; padding-left: 7px; border-bottom: 1px solid #c6c6c6; font: 10px/23px "Liberation Sans", sans-serif; color: #707070; }
.ghtabs button { flex: none; height: 24px; white-space: nowrap; }
.ghtabs .on { padding-left: 8px; margin: 0 10px 0 0; border: 1px solid #b5b5b5; border-bottom: 0; border-radius: 5px 5px 0 0; background: #fff; color: #222; line-height: 22px; }
.ribbon { display: flex; gap: 3px; height: 58px; padding: 1px 2px 11px; background: #e9e9e9; border-bottom: 1px solid #8a8a8a; }
.rgroup { flex: 1 1 0; min-width: 0; display: flex; flex-direction: column; border: 1px solid #8d8d8d; border-radius: 4px; overflow: hidden; background: linear-gradient(#e4e4e4, #cacaca); }
.ricons { flex: 1; display: flex; align-items: center; justify-content: space-around; padding: 0 1px; }
.ricons button, .ricons svg { width: 24px; height: 24px; display: block; }
.ricons svg { width: 22px; margin: 0 1px; }
.ricons i { width: 1px; height: 24px; background: #b5b5b5; }
.rname { position: relative; height: 14px; text-align: center; color: #e8e8e8; background: #1c1c1c; font: 10px/14px "Liberation Sans", sans-serif; padding-right: 10px; }
.rname b { position: absolute; right: 3px; top: 0; font-size: 11px; color: #aaa; }
.ghbar { height: 29px; display: flex; align-items: center; gap: 4px; padding-left: 3px; background: #fff; }
.ghbar button { position: relative; display: grid; place-items: center; width: 24px; height: 27px; }
.ghbar svg { width: 22px; height: 22px; }
.ghbar .drop { margin-right: 13px; }
.ghbar .drop::after { content: ""; position: absolute; right: -11px; top: 12px; border: 2px solid transparent; border-top-color: #111; border-bottom: 0; }
.sep { width: 1px; height: 22px; background: #c9c9c9; }
.zoom { position: relative; width: 144px; height: 23px; }
.zoom::after { content: ""; position: absolute; right: 6px; top: 7px; width: 5px; height: 5px; border: solid #888; border-width: 0 1px 1px 0; transform: rotate(45deg); }
.zoom select { appearance: none; width: 100%; height: 100%; padding: 0 3px; border: 1px solid #9a9a9a; border-radius: 0; background: #fff; font: inherit; color: #333; }
.right { display: flex; align-items: center; gap: 3px; margin-left: auto; }
.right .sep { margin: 0 1px; }
.ghbar .picked { width: 27px; margin-right: 4px; border: 1px solid #3b98e0; background: #e3f1fb; }
.ghbar .right .drop { margin-right: 10px; }
.ghbar .right .drop::after { right: -6px; }

.canvas { position: relative; flex: 1; overflow: hidden; color: #2d2d33; font: 10px/14px "Noto Sans", "Open Sans", sans-serif; background: linear-gradient(90deg, #bdbab0 1px, transparent 1px) 128px 0 / 150px 50px, linear-gradient(#bdbab0 1px, transparent 1px) 0 27px / 150px 50px, #d4d0c8; }
.above { height: 128px; background: linear-gradient(transparent 80%, rgba(60, 58, 54, .45)), rgba(190, 186, 172, .35); border-bottom: 1px solid #3c3b39; }
.wires { position: absolute; inset: 0; width: 100%; height: 100%; }
.cluster { position: absolute; background: rgba(140, 138, 160, .72); }
.cluster span { position: absolute; left: 15px; bottom: 8px; color: #0b0b0b; font: 500 25px/32px Inter, sans-serif; white-space: nowrap; }
.node { position: absolute; display: flex; align-items: center; justify-content: space-between; padding: 0 9px 2px 7px; border: 1px solid #444; border-radius: 3px; background: linear-gradient(#e2e2e6, #cbcad3 7px, #a9a7b6 8px, #8e8b9d); }
.node.jag { border: 0; background: none; justify-content: flex-start; gap: 4px; padding: 1px 9px 3px 7px; }
.shape { position: absolute; inset: 0; width: 100%; height: 100%; }
.ports { position: relative; align-self: stretch; display: flex; flex-direction: column; min-width: 9px; }
.ports span { flex: 1; display: flex; align-items: center; justify-content: center; }
.side .ports.out span { justify-content: flex-start; }
.glyph { position: relative; width: 24px; height: 24px; }
.param { position: absolute; display: grid; place-items: center; border: 1px solid #555; border-radius: 3px; background: linear-gradient(#fff, #d4d4d4); }
.param svg { width: 24px; height: 22px; }
.slider { position: absolute; display: flex; border: 1px solid #444; border-radius: 3px; background: linear-gradient(#fff, #e4e4e4 7px, #d3d3d3 8px, #dedede); }
.slider span, .swatch span { display: grid; place-items: center; border-right: 1px solid #444; background: linear-gradient(#d8d8de, #a9a7b6 7px, #9694a5); }
.slider input { appearance: none; flex: 1; min-width: 0; height: 6px; margin: 5px 9px; background: repeating-linear-gradient(90deg, #c0c0c0 0 1px, transparent 1px 14px), linear-gradient(#c4c4c4, #c4c4c4) 0 100% / 100% 1px no-repeat; }
.slider input::-webkit-slider-thumb { appearance: none; width: 8px; height: 14px; background: transparent; }
.slider i { position: absolute; top: 7px; width: 6px; height: 6px; margin-left: -4px; border: 1px solid #111; background: #fff; transform: rotate(45deg); outline: 1px solid #111; outline-offset: -1px; }
.slider output { position: absolute; top: 2px; background: #dcdcdc; font-size: 11px; }
.swatch { position: absolute; display: flex; border: 1px solid #444; border-radius: 3px; overflow: hidden; background: #fff; }
.swatch span { width: 48px; }
.swatch i { flex: 1; box-shadow: inset 0 6px rgba(255, 255, 255, .35); }
.cursor { position: absolute; left: 364px; top: 565px; width: 25px; height: 41px; }
.handle { position: absolute; left: 0; bottom: 0; width: 7px; height: 29px; border: 1px solid #333; border-left: 0; background: linear-gradient(#aaa, #666); }
.compass { position: absolute; right: 7px; bottom: 8px; width: 50px; height: 46px; }
.ghstatus { position: relative; height: 18px; display: flex; align-items: center; gap: 3px; padding: 4px 31px 0 3px; border-top: 1px solid #fff; background: #f0f0f0; color: #333; }
.ghstatus svg { width: 16px; height: 16px; flex: none; }
.ghstatus small { margin-left: auto; color: #777; font-size: 12px; }
.ghstatus .sizer { position: absolute; right: 1px; bottom: 1px; width: 8px; height: 8px; }
</style>
